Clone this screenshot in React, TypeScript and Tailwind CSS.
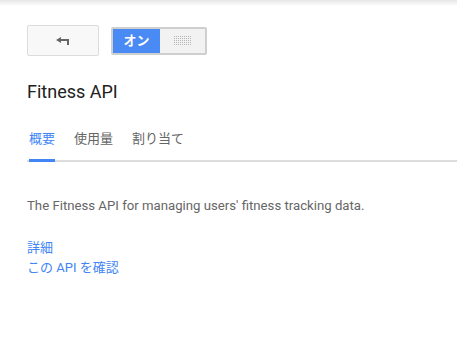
import React, { useState } from 'react';

const TABS = ['概要', '使用量', '割り当て'];

const FONT = { fontFamily: 'Roboto, "Noto Sans CJK JP", sans-serif' };

const BackArrow = () => (
  <svg width="14" height="8" viewBox="0 0 14 8" className="block">
    <path d="M0 3 L5 0 L5 6 Z" fill="#666" />
    <rect x="4" y="2" width="9" height="2" fill="#666" />
    <rect x="11" y="2" width="2" height="6" fill="#666" />
  </svg>
);

const Grip = () => {
  const dots = [];
  for (let r = 0; r < 5; r++) {
    for (let c = 0; c < 9; c++) {
      dots.push(<rect key={`${r}-${c}`} x={c * 2} y={r * 2} width="1" height="1" fill="#b5b5b5" />);
    }
  }
  return (
    <svg width="17" height="9" viewBox="0 0 17 9" className="block">
      {dots}
    </svg>
  );
};

export default function App() {
  const [active, setActive] = useState(0);
  const [on, setOn] = useState(true);

  return (
    <div className="w-full h-[337px] bg-white overflow-hidden" style={FONT}>
      {/* top shadow */}
      <div className="h-[6px] bg-gradient-to-b from-[#e6e6e6] to-white" />

      <div className="pl-[27px]">
        <div className="flex items-center gap-[12px] mt-[19px]">
          <button className="w-[72px] h-[31px] border border-[#dcdcdc] rounded-[2px] bg-[#f8f8f8] flex items-center justify-center">
            <BackArrow />
          </button>
          <button
            onClick={() => setOn(!on)}
            className="flex h-[28px] w-[96px] border-2 border-[#cfcfcf] rounded-[2px] overflow-hidden"
          >
            <span className="w-[47px] h-full bg-[#4a8af4] text-white text-[13px] font-bold flex items-center justify-center">
              オン
            </span>
            <span className="flex-1 h-full bg-[#f2f2f2] flex items-center justify-center">
              <Grip />
            </span>
          </button>
        </div>

        <h1 className="mt-[24px] text-[18px] leading-[24px] text-[#212121]">Fitness API</h1>

        <div className="mt-[27px] flex border-b-2 border-[#dddddd]">
          {TABS.map((t, i) => (
            <button
              key={t}
              onClick={() => setActive(i)}
              className={`relative pl-[2px] pr-[4px] mr-[13px] pb-[13px] text-[13px] leading-[16px] ${
                i === active ? 'text-[#4285f4]' : 'text-[#666666]'
              }`}
            >
              {t}
              {i === active && (
                <span className="absolute left-[2px] right-[4px] -bottom-[2px] h-[3px] bg-[#4285f4]" />
              )}
            </button>
          ))}
        </div>

        <p className="mt-[35px] text-[13.2px] leading-[18px] text-[#666666]">
          The Fitness API for managing users' fitness tracking data.
        </p>

        <div className="mt-[23px] flex flex-col text-[13px] leading-[20px] text-[#4285f4]">
          <a href="#">詳細</a>
          <a href="#">この API を確認</a>
        </div>
      </div>
    </div>
  );
}
